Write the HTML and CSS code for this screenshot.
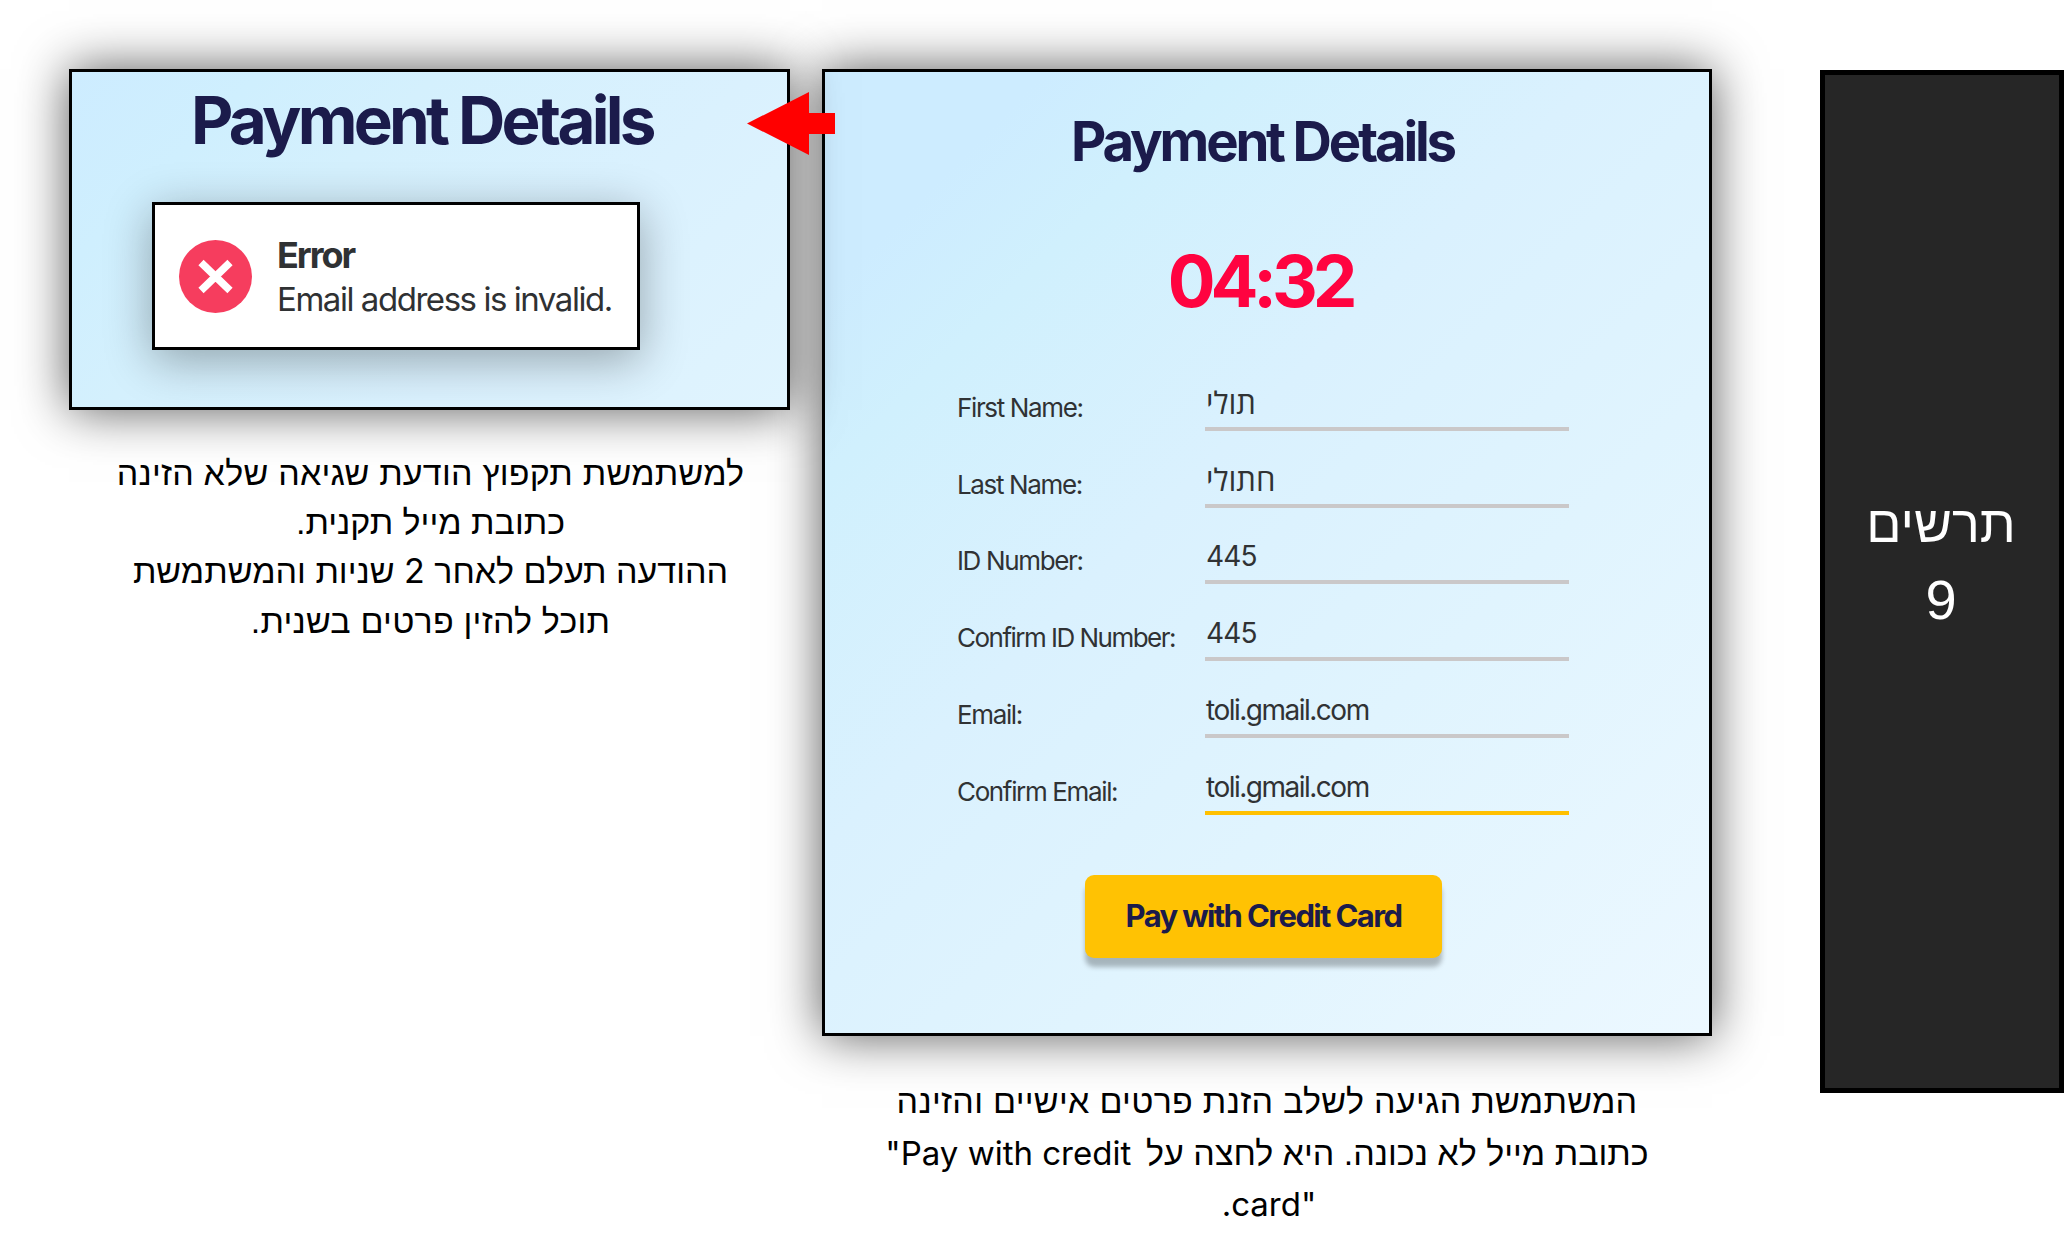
FILE: index.html
```html
<!DOCTYPE html>
<html lang="he">
<head>
<meta charset="utf-8">
<title>Payment Details</title>
<link rel="stylesheet" href="styles.css">
</head>
<body>
<main class="slide">
  <section class="column column-result">
    <div class="card card-result">
      <h2 class="title title-large">Payment Details</h2>
      <div class="alert">
        <svg class="alert-icon" viewBox="0 0 73 73" aria-hidden="true">
          <circle cx="36.5" cy="36.5" r="36.5" fill="#f63d5e"/>
          <path d="M22 22.5 51 50.5M51 22.5 22 50.5" stroke="#fff" stroke-width="7.5" fill="none"/>
        </svg>
        <div class="alert-body">
          <div class="alert-title">Error</div>
          <div class="alert-text">Email address is invalid.</div>
        </div>
      </div>
      <svg class="arrow" viewBox="0 0 88 63" aria-hidden="true">
        <path d="M0 31.5 62 0V21H88V42H62V63Z" fill="#f00"/>
      </svg>
    </div>
    <div class="caption caption-result" dir="rtl">
      <div>למשתמשת תקפוץ הודעת שגיאה שלא הזינה</div>
      <div class="tight">כתובת מייל תקנית.</div>
      <div class="tight">ההודעה תעלם לאחר <span class="num">2</span> שניות והמשתמשת</div>
      <div>תוכל להזין פרטים בשנית.</div>
    </div>
  </section>
  <section class="column column-form">
    <div class="card card-form">
      <h2 class="title">Payment Details</h2>
      <div class="timer">04:32</div>
      <div class="form">
        <div class="row"><span class="label">First Name:</span><span class="field field-he">תולי</span></div>
        <div class="row"><span class="label">Last Name:</span><span class="field field-he">חתולי</span></div>
        <div class="row"><span class="label">ID Number:</span><span class="field field-num">445</span></div>
        <div class="row"><span class="label label-long">Confirm ID Number:</span><span class="field field-num">445</span></div>
        <div class="row"><span class="label">Email:</span><span class="field">toli.gmail.com</span></div>
        <div class="row"><span class="label">Confirm Email:</span><span class="field field-active">toli.gmail.com</span></div>
      </div>
      <div class="pay">Pay with Credit Card</div>
    </div>
    <div class="caption caption-form" dir="rtl">
      <div>המשתמשת הגיעה לשלב הזנת פרטים אישיים והזינה</div>
      <div class="tight">כתובת מייל לא נכונה. היא לחצה על&nbsp; <bdi class="latin" dir="ltr">"Pay with credit</bdi></div>
      <div><bdi class="latin" dir="ltr">.card"</bdi></div>
    </div>
  </section>
  <aside class="side" dir="rtl">
    <div class="side-word">תרשים</div>
    <div class="side-num">9</div>
  </aside>
</main>
</body>
</html>
```
FILE: styles.css
```css
* { box-sizing: border-box; }
body { margin: 0; background: #fff; font-family: Inter, "Liberation Sans", sans-serif; }
.slide { display: flex; align-items: flex-start; width: 2064px; height: 1256px; padding: 69px 0 0 69px; overflow: hidden; }
.column { flex: none; }
.column-result { width: 721px; }
.column-form { width: 890px; margin-left: 32px; }

.card {
  position: relative;
  border: 3px solid #000;
  box-shadow: 0 0 48px rgba(0, 0, 0, .65);
}
.card-result {
  z-index: 1;
  height: 341px;
  padding-top: 9px;
  background: linear-gradient(135deg, #cdecff 0%, #cfeffe 18%, #d4f0fd 35%, #daf1fe 65%, #e0f4fe 100%);
}
.card-form {
  height: 967px;
  padding-top: 36px;
  background: linear-gradient(135deg, #cdecff 0%, #cdecff 12%, #d0f0fd 22%, #daf1fe 42%, #e0f4fe 65%, #ecf8ff 100%);
}

.title { margin: 0; padding-right: 9px; font-weight: 700; font-size: 54.5px; line-height: 66px; letter-spacing: -3.2px; text-align: center; color: #1b1b4b; white-space: nowrap; }
.title-large { padding: 0 0 0 119px; font-size: 65.5px; line-height: 80px; letter-spacing: -3.75px; text-align: left; }

.alert {
  display: flex;
  align-items: center;
  gap: 25px;
  width: 488px;
  height: 148px;
  margin: 41px 0 0 80px;
  padding-left: 24px;
  border: 3px solid #000;
  background: #fff;
  box-shadow: 0 10px 44px rgba(0, 0, 0, .32);
  color: #2f3133;
  white-space: nowrap;
}
.alert-icon { flex: none; width: 73px; height: 73px; }
.alert-body { padding-top: 2px; line-height: 44px; }
.alert-title { font-size: 36px; font-weight: 700; letter-spacing: -2.04px; }
.alert-text { font-size: 33px; line-height: 45px; letter-spacing: -1.45px; }

.arrow { position: absolute; left: 675px; top: 20px; width: 88px; height: 63px; }

.timer { margin-top: 64px; padding-right: 14px; font-size: 71px; font-weight: 700; line-height: 86px; letter-spacing: -5.1px; text-align: center; color: #ff0340; }

.form { margin-top: 30px; padding-left: 132px; }
.row { display: flex; align-items: flex-end; height: 76.8px; }
.label { width: 248px; padding-bottom: 8px; font-size: 26px; line-height: 30px; letter-spacing: -1.36px; color: #303234; white-space: nowrap; }
.label-long { letter-spacing: -1.52px; }
.field { width: 364px; padding-left: 1px; padding-bottom: 7px; border-bottom: 4px solid #cac8c9; font-size: 28px; line-height: 34px; letter-spacing: -1.5px; color: #303234; }
.field-num { letter-spacing: -.79px; }
.field-he { padding-bottom: 8px; font-family: "Open Sans", sans-serif; font-size: 31px; letter-spacing: 0; }
.field-active { border-color: #ffc000; }

.pay {
  width: 357px;
  height: 83px;
  margin: 60px 0 0 260px;
  border-radius: 9px;
  background: #ffc203;
  box-shadow: 0 9px 5px rgba(0, 0, 0, .26);
  font-size: 31px;
  font-weight: 700;
  line-height: 82px;
  letter-spacing: -1.62px;
  text-align: center;
  color: #1b1b4b;
}

.caption { font-family: "Liberation Sans", sans-serif; font-size: 34px; letter-spacing: .22px; text-align: center; color: #000; white-space: nowrap; }
.caption-result { margin-top: 39px; padding-left: 2px; line-height: 49.2px; }
.caption-form { margin-top: 40px; line-height: 51.5px; letter-spacing: .28px; }
.tight { letter-spacing: 0; }
.num, .latin { font-family: Inter, sans-serif; line-height: 1; }
.latin { margin-right: -4px; font-size: 33px; letter-spacing: 0; }

.side {
  flex: none;
  display: flex;
  flex-direction: column;
  align-items: center;
  width: 244px;
  height: 1023px;
  margin: 1px 0 0 108px;
  padding: 412px 2px 0 0;
  border: 5px solid #000;
  background: #262626;
  font-family: "Liberation Sans", sans-serif;
  line-height: 75px;
  color: #fff;
}
.side-word { font-size: 52px; }
.side-num { font-size: 56px; }
```
